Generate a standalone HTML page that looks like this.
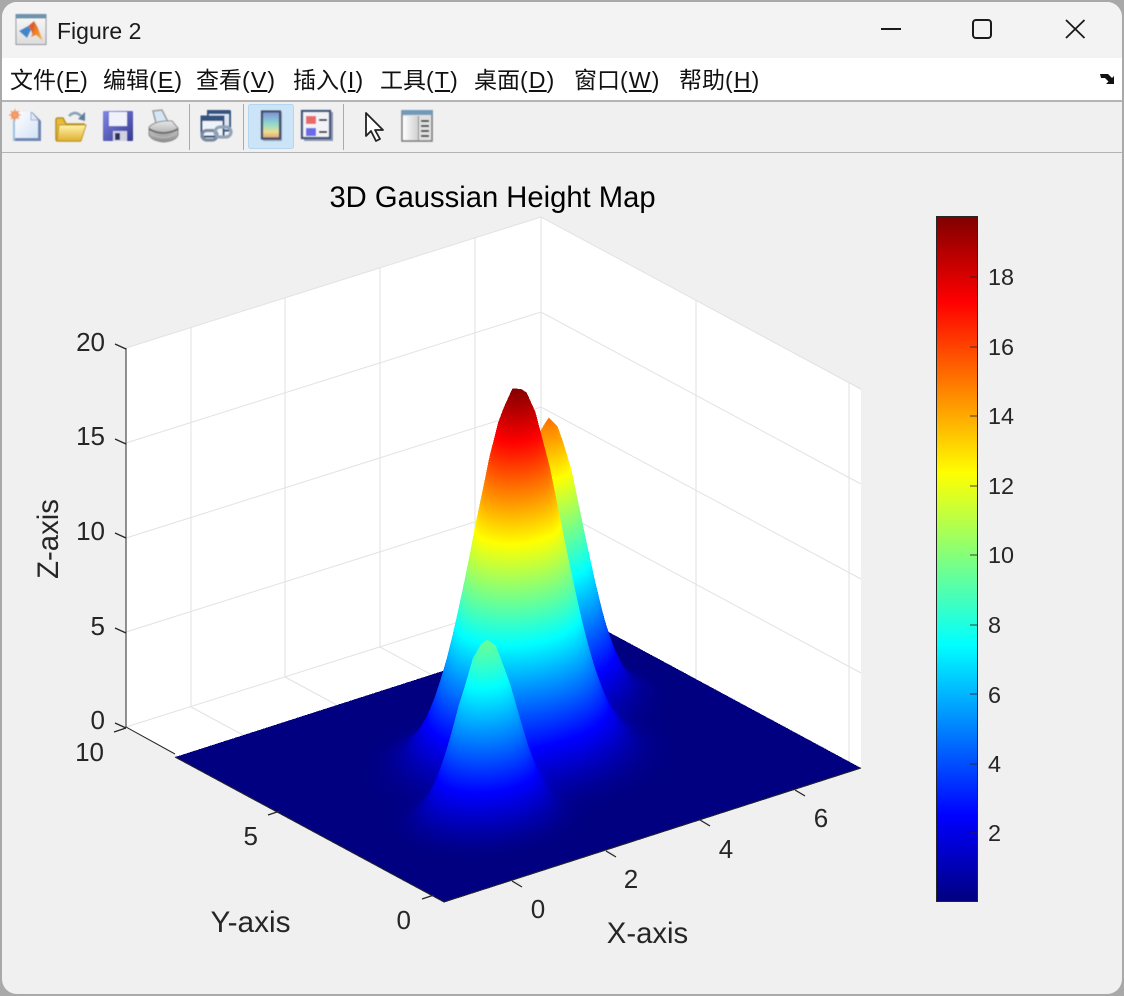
<!DOCTYPE html>
<html><head><meta charset="utf-8"><title>Figure 2</title>
<style>
html,body{margin:0;padding:0;width:1124px;height:996px;overflow:hidden;background:#a9a9a9}
#win{position:absolute;left:2px;top:2px;width:1120px;height:992px;border-radius:15px;background:#f0f0f0;overflow:hidden}
#tb{position:absolute;left:0;top:0;width:1120px;height:56px;background:#f3f3f3}
#mb{position:absolute;left:0;top:56px;width:1120px;height:42px;background:#fff;border-bottom:2px solid #b4b4b4}
#tl{position:absolute;left:0;top:150px;width:1120px;height:1px;background:#b4b4b4}
.m{position:absolute;top:62px;font:23px/36px "Liberation Sans","Noto Sans CJK SC",sans-serif;color:#111;white-space:nowrap}
.m b{font-weight:normal;letter-spacing:1.200px}
svg{position:absolute;left:0;top:0}
canvas{position:absolute;left:0;top:0;width:1124px;height:996px}
text{font-family:"Liberation Sans",sans-serif;fill:#262626}
</style></head><body>
<div id="win"><div id="tb"></div><div id="mb"></div><div id="tl"></div></div>
<span class="m" style="left:10px">文件<b>(<u>F</u>)</b></span>
<span class="m" style="left:103px">编辑<b>(<u>E</u>)</b></span>
<span class="m" style="left:196px">查看<b>(<u>V</u>)</b></span>
<span class="m" style="left:293px">插入<b>(<u>I</u>)</b></span>
<span class="m" style="left:380px">工具<b>(<u>T</u>)</b></span>
<span class="m" style="left:474px">桌面<b>(<u>D</u>)</b></span>
<span class="m" style="left:574px">窗口<b>(<u>W</u>)</b></span>
<span class="m" style="left:679px">帮助<b>(<u>H</u>)</b></span>

<svg width="1124" height="996" viewBox="0 0 1124 996">
<defs>
<linearGradient id="jet" x1="0" y1="1" x2="0" y2="0">
<stop offset="0" stop-color="#000080"/><stop offset=".125" stop-color="#0000ff"/><stop offset=".375" stop-color="#00ffff"/><stop offset=".625" stop-color="#ffff00"/><stop offset=".875" stop-color="#ff0000"/><stop offset="1" stop-color="#800000"/>
</linearGradient>
<linearGradient id="cbi" x1="0" y1="0" x2="0" y2="1"><stop offset="0" stop-color="#7f8fd8"/><stop offset=".45" stop-color="#8fd8d0"/><stop offset=".75" stop-color="#e8e090"/><stop offset="1" stop-color="#e89a70"/></linearGradient>
<linearGradient id="fold" x1="0" y1="0" x2="0" y2="1"><stop offset="0" stop-color="#fff3a8"/><stop offset="1" stop-color="#e0b033"/></linearGradient>
<linearGradient id="pap" x1="0" y1="0" x2="1" y2="1"><stop offset="0" stop-color="#ffffff"/><stop offset="1" stop-color="#d3e3f6"/></linearGradient>
<linearGradient id="prt" x1="0" y1="0" x2="0" y2="1"><stop offset="0" stop-color="#e8e8e8"/><stop offset="1" stop-color="#8c8c8c"/></linearGradient>
<linearGradient id="flp" x1="0" y1="0" x2="1" y2="1"><stop offset="0" stop-color="#8286e4"/><stop offset="1" stop-color="#34398f"/></linearGradient>
<linearGradient id="fr" x1="0" y1="0" x2="1" y2="0"><stop offset="0" stop-color="#fff"/><stop offset="1" stop-color="#d0d0d0"/></linearGradient>
<linearGradient id="mi" x1="0" y1="0" x2="0" y2="1"><stop offset="0" stop-color="#fafafa"/><stop offset="1" stop-color="#dcdcdc"/></linearGradient>
<linearGradient id="mo" x1="0" y1="0" x2="1" y2="1"><stop offset="0" stop-color="#d8542a"/><stop offset=".6" stop-color="#f0902c"/><stop offset="1" stop-color="#f8c050"/></linearGradient>
<filter id="sb" x="-10%" y="-10%" width="120%" height="120%"><feGaussianBlur stdDeviation=".5"/></filter>
</defs>

<!-- window title icon -->
<g filter="url(#sb)">
<rect x="16" y="14.500" width="30" height="30" fill="url(#mi)" stroke="#8d939b"/>
<rect x="16" y="14" width="30" height="4.500" fill="#6d93ad"/>
<polygon points="19,31 28,26 31,30 27,38" fill="#3f86cc"/>
<polygon points="28,26 34,21 38,28 33,36 31,30" fill="#d8602a"/>
<polygon points="34,21 38,28 43,41 36,35 31,37 33,32" fill="url(#mo)"/>
</g>

<!-- window controls -->
<rect x="881" y="28" width="20" height="2" fill="#1a1a1a"/>
<rect x="973" y="20" width="18" height="18" rx="3" fill="none" stroke="#1a1a1a" stroke-width="2"/>
<path d="M1066 20L1084.500 38M1084.500 20L1066 38" stroke="#1a1a1a" stroke-width="1.800" fill="none"/>
<!-- menu overflow arrow -->
<path d="M1100 74L1108 74L1112 78L1114 76L1114 84L1106 84L1108.500 81.500L1105 78L1101 78Z" fill="#111"/>

<!-- toolbar -->
<rect x="189" y="104" width="1" height="46" fill="#aaa"/>
<rect x="243" y="104" width="1" height="46" fill="#aaa"/>
<rect x="343" y="104" width="1" height="46" fill="#aaa"/>
<rect x="248.500" y="104.500" width="45" height="44" rx="2" fill="#cce4f7" stroke="#b4d6f0"/>

<g filter="url(#sb)">
<!-- new -->
<path d="M14 112H32L41 121V141H14Z" fill="#6f86b4"/>
<path d="M14 112H31L38 120V138H14Z" fill="url(#pap)"/>
<path d="M31 112V120H38" fill="#dfe8f5" stroke="#9fb2d0" stroke-width="1"/>
<path d="M14 112V141" stroke="#9cc0e0" stroke-width="2"/>
<circle cx="15" cy="115" r="4" fill="#ee8240"/><path d="M9 115H21M15 109V121M11 111L19 119M19 111L11 119" stroke="#f3a070" stroke-width="1.300"/>
<!-- open -->
<path d="M56 120V139Q56 141 58 141H80L84 124H66L63 118H58Q56 118 56 120Z" fill="#e6bc3c" stroke="#b98f1e" stroke-width="1.500"/>
<path d="M59 125H86L81 141H57Z" fill="url(#fold)" stroke="#bf9722"/>
<path d="M69 116Q75 110 81 116" fill="none" stroke="#8ba2b8" stroke-width="2.500"/><polygon points="85,112 85,121 78,119" fill="#5d7e9e"/>
<!-- save -->
<rect x="103" y="111" width="30" height="30" rx="1" fill="url(#flp)"/>
<rect x="109" y="112" width="18" height="14" fill="#f0f2fb"/>
<rect x="113" y="131" width="14" height="10" fill="#d0d2e4"/><rect x="115" y="133" width="5" height="7" fill="#2e3158"/>
<!-- print -->
<path d="M153 111L162 110L168 122L156 123Z" fill="#d5e6f5" stroke="#9a9a9a" stroke-width="1.500"/>
<path d="M149 127Q156 120 172 121L178 128V135Q176 141 164 142Q152 141 149 135Z" fill="url(#prt)" stroke="#8c8c8c"/>
<path d="M149 129Q163 137 178 129" fill="none" stroke="#6e6e6e" stroke-width="2"/>
<path d="M151 134Q163 141 176 134" fill="none" stroke="#b8b8b8" stroke-width="1.500"/>
<!-- link -->
<rect x="208" y="111.500" width="22" height="19" fill="#dce6f3" stroke="#34537f" stroke-width="2"/>
<rect x="201.500" y="116.500" width="22" height="20" fill="#eef3fa" stroke="#34537f" stroke-width="2"/>
<rect x="201" y="116" width="23" height="5" fill="#34537f"/><rect x="207" y="110" width="23" height="4" fill="#34537f"/>
<rect x="202" y="130.500" width="15" height="9.500" rx="4.700" fill="none" stroke="#7a8a9e" stroke-width="3.200"/>
<rect x="215" y="127" width="16" height="10" rx="5" fill="none" stroke="#93a3b6" stroke-width="3.200"/>
<!-- colorbar -->
<rect x="263" y="112" width="19" height="29" fill="#667" opacity=".5"/>
<rect x="262" y="111.500" width="18" height="27" fill="url(#cbi)" stroke="#434d6a" stroke-width="2.200"/>
<!-- legend -->
<rect x="304" y="112" width="29" height="29" fill="#8d97ad"/>
<rect x="302" y="111" width="28" height="27" fill="#f2f3f7" stroke="#3e5078" stroke-width="2.200"/>
<rect x="306" y="116" width="10" height="8" fill="#ea6a6a"/><rect x="306" y="128" width="10" height="8" fill="#6a6aea"/>
<rect x="319" y="119" width="8" height="2" fill="#333"/><rect x="319" y="131" width="8" height="2" fill="#333"/>
<!-- panel -->
<rect x="402" y="111" width="30" height="30" fill="#e0e0e0" stroke="#777" stroke-width="1.500"/>
<rect x="402" y="110" width="31" height="5" fill="#6f9ab8"/>
<rect x="403" y="116" width="15" height="24" fill="url(#fr)"/><rect x="418" y="116" width="1" height="24" fill="#888"/>
<rect x="421" y="120" width="8" height="2" fill="#444"/><rect x="421" y="125" width="8" height="2" fill="#444"/><rect x="421" y="130" width="8" height="2" fill="#444"/><rect x="421" y="135" width="8" height="2" fill="#444"/>
</g>
<!-- pointer -->
<path d="M366 113V136L371 131L376 141L380 139L375 130H383Z" fill="#fff" stroke="#222" stroke-width="1.800" stroke-linejoin="round"/>

<text x="57" y="39" font-size="23" style="fill:#1a1a1a">Figure 2</text>

<!-- axes walls -->
<polygon points="126,348 541,217 861,390 861,768 444,902 126,727" fill="#fff"/>
<g stroke="#e2e2e2" stroke-width="1" fill="none">
<path d="M126 348L541 217L861 389M126 443L541 312L861 484M126 538L541 407L861 579M126 632L541 501L861 673M126 727L541 596L861 768"/>
<path d="M541 217V596M191 328V707M285 298V677M380 268V647M475 238V617M696 300V679M849 383V762"/>
<path d="M191 707L520 884M285 677L615 855M380 647L710 825M475 617L805 795"/>
</g>
</svg>
<canvas id="c" width="2248" height="1992"></canvas>
<svg width="1124" height="996" viewBox="0 0 1124 996">
<g stroke="#262626" stroke-width="1.300" fill="none">
<path d="M126 348V727L175 754M175 757L444 902L861 768" stroke-width="1"/>
<path d="M115 344L126 349M115 439L126 444M115 533L126 538M115 628L126 633M115 723L126 728"/>
<path d="M114 732L126 728M268 815L280 811M422 899L434 895"/>
<path d="M512 881L522 887M606 851L616 857M700 820L710 826M795 790L805 796"/>
</g>
<text x="492.500" y="207" font-size="29.200" text-anchor="middle" style="fill:#000">3D Gaussian Height Map</text>
<g font-size="26" text-anchor="end">
<text x="105" y="351">20</text><text x="105" y="445">15</text><text x="105" y="540">10</text><text x="105" y="635">5</text><text x="105" y="729">0</text>
<text x="104" y="761">10</text><text x="258" y="845">5</text><text x="411" y="929">0</text>
</g>
<g font-size="26" text-anchor="middle">
<text x="538" y="918">0</text><text x="631" y="888">2</text><text x="726" y="858">4</text><text x="821" y="827">6</text>
</g>
<text x="250.500" y="932" font-size="29.800" text-anchor="middle">Y-axis</text>
<text x="647.500" y="943" font-size="29.300" text-anchor="middle">X-axis</text>
<text transform="translate(58 539) rotate(-90)" font-size="29.300" text-anchor="middle">Z-axis</text>

<rect x="936.500" y="216.500" width="41" height="685" fill="url(#jet)" stroke="#262626" stroke-width="1"/>
<g stroke="#262626" stroke-width="1" opacity=".85">
<path d="M970 277H978M970 347H978M970 416H978M970 486H978M970 555H978M970 625H978M970 694H978M970 764H978M970 833H978"/>
</g>
<g font-size="23.400">
<text x="988" y="285">18</text><text x="988" y="355">16</text><text x="988" y="424">14</text><text x="988" y="494">12</text><text x="988" y="563">10</text>
<text x="988" y="633">8</text><text x="988" y="703">6</text><text x="988" y="772">4</text><text x="988" y="841">2</text>
</g>
</svg>
<script>
(function(){
var cv=document.getElementById('c'),ctx=cv.getContext('2d');
var K=2,W=cv.width,HH=cv.height,img=ctx.createImageData(W,HH),D=img.data;
var N=48,zmax=19.75,det=96511;
function g(u,v,cu,cv2,s,a){var d=(u-cu)*(u-cu)+(v-cv2)*(v-cv2);return a*Math.exp(-d/(2*s*s));}
function h(u,v){return g(u,v,.507,.511,.09,19.75)+g(u,v,.71,.71,.07,15)+g(u,v,.293,.295,.06,9.5);}
var G=[],i,j;
for(i=0;i<=N;i++){G[i]=[];for(j=0;j<=N;j++)G[i][j]=h(i/N,j/N);}
function H(u,v){var a=u*N,b=v*N,i=Math.max(0,Math.min(N-1,Math.floor(a))),j=Math.max(0,Math.min(N-1,Math.floor(b))),p=a-i,q=b-j;
return G[i][j]*(1-p)*(1-q)+G[i+1][j]*p*(1-q)+G[i][j+1]*(1-p)*q+G[i+1][j+1]*p*q;}
function c(x){return Math.max(0,Math.min(1,x));}
var L=[],T=2048;
for(i=0;i<=T;i++){var t=i/T;L.push([c(Math.min(4*t-1.5,-4*t+4.5))*255,c(Math.min(4*t-.5,-4*t+3.5))*255,c(Math.min(4*t+.5,-4*t+2.5))*255]);}
var ds=.15;
for(var col=0;col<W;col++){
  var x=(col+.5)/K,d=x-444;
  var s0=Math.max(-145*d/269,134*d/417),s1=Math.min((det-145*d)/269,(det+134*d)/417);
  if(s1<=s0)continue;
  var hr=-1;
  for(var s=s0;s<=s1;s+=ds){
    var u=(145*d+269*s)/det,v=(417*s-134*d)/det,z=H(u,v);
    var top=Math.round((902-s-z*18.95)*K);
    if(hr<0){hr=top+1;}
    if(top<hr){
      var e=L[Math.round(Math.min(1,z/zmax)*T)];
      for(var r=hr-1;r>=top;r--){
        if(r<0||r>=HH)continue;
        var o=(r*W+col)*4;D[o]=e[0];D[o+1]=e[1];D[o+2]=e[2];D[o+3]=255;
      }
      hr=top;
    }
  }
}
ctx.putImageData(img,0,0);
})();
</script>
</body></html>
